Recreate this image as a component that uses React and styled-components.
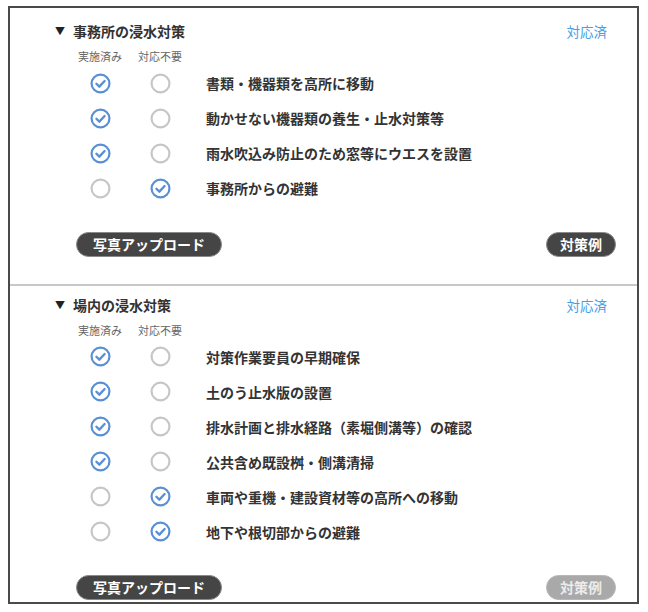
import React from "react";
import styled, { createGlobalStyle } from "styled-components";

const Global = createGlobalStyle`
  html, body { margin: 0; padding: 0; background: #fff; }
  body { font-family: "Noto Sans CJK JP", "Noto Sans", sans-serif; color: #333; }
`;

const Frame = styled.div`
  margin: 6px 0 0 8px;
  width: 631px;
  height: 598px;
  box-sizing: border-box;
  border: 2px solid #4a4a4a;
  display: flex;
  flex-direction: column;
`;

const Section = styled.section`
  padding: ${(p) => p.$top}px 21px ${(p) => p.$bottom}px 45px;
  border-top: ${(p) => (p.$divider ? "2px solid #c8c8c8" : "none")};
  display: flex;
  flex-direction: column;
`;

const TitleRow = styled.div`
  display: flex;
  align-items: center;
  height: 20px;
  padding-right: 9px;
`;

const Triangle = styled.span`
  font-size: 10px;
  line-height: 20px;
  width: 18px;
  color: #222;
`;

const Title = styled.h2`
  margin: 0;
  font-size: 14px;
  line-height: 20px;
  font-weight: 700;
  color: #333;
  flex: 1;
`;

const Status = styled.span`
  font-size: 13.5px;
  line-height: 20px;
  color: #4a9ee6;
`;

const HeaderRow = styled.div`
  display: grid;
  grid-template-columns: 60px 60px;
  margin: 8px 0 0 15px;
  height: 14px;
`;

const HeaderCell = styled.span`
  font-size: 11px;
  line-height: 14px;
  color: #666;
  text-align: center;
`;

const List = styled.ul`
  list-style: none;
  margin: 2.5px 0 0 0;
  padding: 0;
`;

const Row = styled.li`
  display: grid;
  grid-template-columns: 60px 60px 1fr;
  align-items: center;
  height: 35px;
  margin-left: 15px;
`;

const Cell = styled.span`
  display: flex;
  justify-content: center;
  align-items: center;
`;

const Label = styled.span`
  font-size: 14px;
  font-weight: 700;
  color: #333;
  padding-left: 16px;
`;

const Footer = styled.div`
  display: flex;
  justify-content: space-between;
  align-items: center;
  margin: 26px 0 0 21px;
`;

const PillButton = styled.button`
  height: 25px;
  box-sizing: border-box;
  padding: 0 ${(p) => p.$px}px;
  border-radius: 13px;
  border: 1px solid ${(p) => (p.$disabled ? "#b8b8b8" : "#8a8a8a")};
  background: ${(p) => (p.$disabled ? "#a9a9a9" : "#454545")};
  color: ${(p) => (p.$disabled ? "#ececec" : "#fff")};
  font-family: "Noto Sans CJK JP", sans-serif;
  font-size: 14px;
  font-weight: 700;
  line-height: 23px;
  cursor: pointer;
`;

const Radio = ({ checked }) =>
  checked ? (
    <svg width="21" height="21" viewBox="0 0 20 20">
      <circle cx="10" cy="10" r="8.5" fill="none" stroke="#5a8fd4" strokeWidth="2.1" />
      <path d="M6.1 10.2 L8.9 13 L13.9 7.6" fill="none" stroke="#5a8fd4" strokeWidth="2.2" strokeLinecap="round" strokeLinejoin="round" />
    </svg>
  ) : (
    <svg width="21" height="21" viewBox="0 0 20 20">
      <circle cx="10" cy="10" r="8.5" fill="none" stroke="#c6c6c6" strokeWidth="2.1" />
    </svg>
  );

const sections = [
  {
    title: "事務所の浸水対策",
    top: 13,
    bottom: 27,
    divider: false,
    exampleDisabled: false,
    items: [
      ["書類・機器類を高所に移動", 0],
      ["動かせない機器類の養生・止水対策等", 0],
      ["雨水吹込み防止のため窓等にウエスを設置", 0],
      ["事務所からの避難", 1],
    ],
  },
  {
    title: "場内の浸水対策",
    top: 9,
    bottom: 0,
    divider: true,
    exampleDisabled: true,
    items: [
      ["対策作業要員の早期確保", 0],
      ["土のう止水版の設置", 0],
      ["排水計画と排水経路（素堀側溝等）の確認", 0],
      ["公共含め既設桝・側溝清掃", 0],
      ["車両や重機・建設資材等の高所への移動", 1],
      ["地下や根切部からの避難", 1],
    ],
  },
];

export default function App() {
  return (
    <>
      <Global />
      <Frame>
        {sections.map((s) => (
          <Section key={s.title} $top={s.top} $bottom={s.bottom} $divider={s.divider}>
            <TitleRow>
              <Triangle>▼</Triangle>
              <Title>{s.title}</Title>
              <Status>対応済</Status>
            </TitleRow>
            <HeaderRow>
              <HeaderCell>実施済み</HeaderCell>
              <HeaderCell>対応不要</HeaderCell>
            </HeaderRow>
            <List>
              {s.items.map(([label, sel]) => (
                <Row key={label}>
                  <Cell><Radio checked={sel === 0} /></Cell>
                  <Cell><Radio checked={sel === 1} /></Cell>
                  <Label>{label}</Label>
                </Row>
              ))}
            </List>
            <Footer>
              <PillButton $px={16}>写真アップロード</PillButton>
              <PillButton $px={13} $disabled={s.exampleDisabled}>対策例</PillButton>
            </Footer>
          </Section>
        ))}
      </Frame>
    </>
  );
}
